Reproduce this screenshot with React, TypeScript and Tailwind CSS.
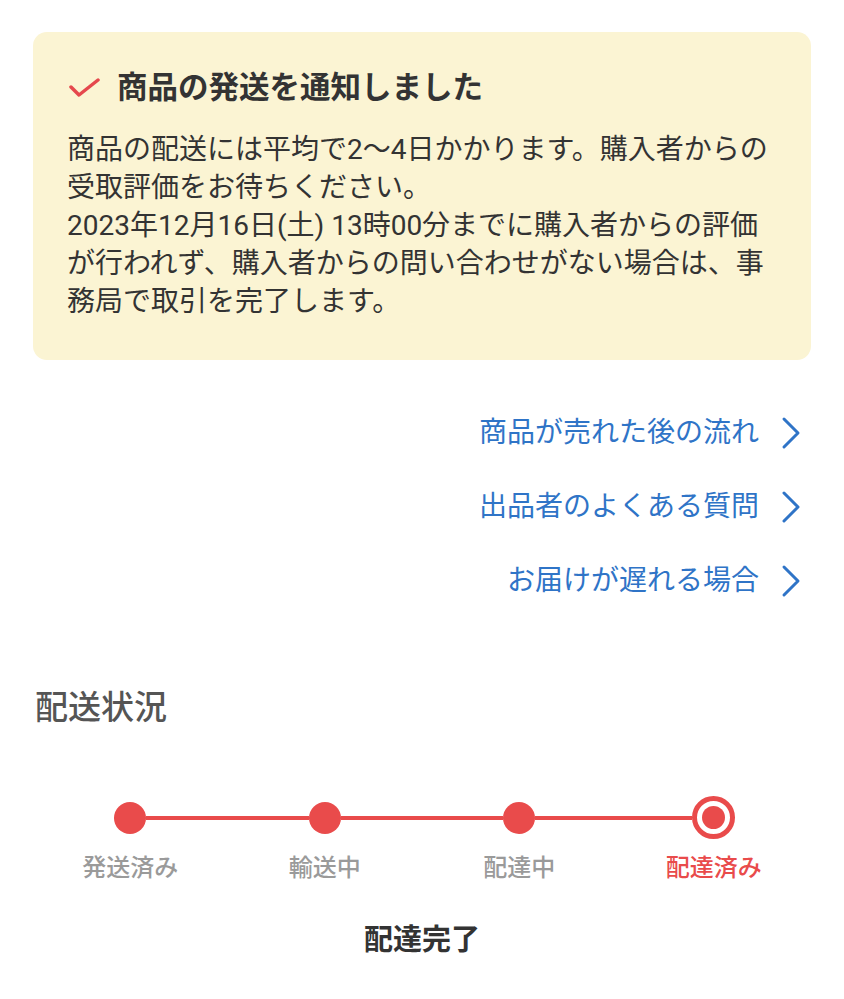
const FONT = { fontFamily: '"Roboto", "Noto Sans CJK JP", sans-serif' };

const links = ["商品が売れた後の流れ", "出品者のよくある質問", "お届けが遅れる場合"];

const steps = ["発送済み", "輸送中", "配達中", "配達済み"];

function Chevron() {
  return (
    <svg width="20" height="34" viewBox="0 0 20 34" fill="none" className="shrink-0">
      <polyline
        points="3,3 17,17 3,31"
        stroke="#2f74c7"
        strokeWidth="3"
        strokeLinecap="round"
        strokeLinejoin="round"
      />
    </svg>
  );
}

function Step({ label, index, last }: { label: string; index: number; last: boolean }) {
  return (
    <div className="flex flex-col items-center">
      <div className="flex h-[43px] w-full items-center">
        <div className={`h-[4px] flex-1 ${index === 0 ? "bg-transparent" : "bg-[#e94b4b]"}`} />
        {last ? (
          <div className="flex h-[43px] w-[43px] items-center justify-center rounded-full border-[5px] border-[#e94b4b] bg-white">
            <div className="h-[23px] w-[23px] rounded-full bg-[#e94b4b]" />
          </div>
        ) : (
          <div className="h-[32px] w-[32px] rounded-full bg-[#e94b4b]" />
        )}
        <div className={`h-[4px] flex-1 ${last ? "bg-transparent" : "bg-[#e94b4b]"}`} />
      </div>
      <span
        className={`mt-[13px] text-[24px] font-medium leading-[32px] ${last ? "text-[#e94b4b]" : "text-[#9a9a9a]"}`}
      >
        {label}
      </span>
    </div>
  );
}

export default function App() {
  return (
    <div className="min-h-[999px] w-[844px] bg-white pt-[32px]" style={FONT}>
      {/* 発送通知 */}
      <div className="mx-[33px] rounded-[14px] bg-[#fbf4d3] px-[34px] pb-[39px] pt-[36px]">
        <div className="flex items-center">
          <svg width="33" height="20" viewBox="0 0 33 20" fill="none" className="shrink-0">
            <polyline
              points="4,9 12,17 31,2"
              stroke="#e5484d"
              strokeWidth="3.5"
              strokeLinecap="round"
              strokeLinejoin="round"
            />
          </svg>
          <h1 className="ml-[17px] text-[30.5px] font-bold leading-[40px] text-[#333]">
            商品の発送を通知しました
          </h1>
        </div>
        <p className="mt-[23px] whitespace-nowrap text-[28px] leading-[38px] text-[#333]">
          商品の配送には平均で2〜4日かかります。購入者からの
          <br />
          受取評価をお待ちください。
          <br />
          2023年12月16日(土) 13時00分までに購入者からの評価
          <br />
          が行われず、購入者からの問い合わせがない場合は、事
          <br />
          務局で取引を完了します。
        </p>
      </div>

      {/* リンク */}
      <div className="mt-[36px] flex flex-col items-end pr-[43px]">
        {links.map((l) => (
          <a key={l} className="flex h-[74px] items-center gap-[22px] text-[28px] text-[#2f74c7]">
            <span>{l}</span>
            <Chevron />
          </a>
        ))}
      </div>

      {/* 配送状況 */}
      <h2 className="ml-[35px] mt-[70px] text-[33px] font-medium leading-[40px] text-[#555]">
        配送状況
      </h2>

      <div className="mx-[33px] mt-[68px] grid grid-cols-4">
        {steps.map((s, i) => (
          <Step key={s} label={s} index={i} last={i === steps.length - 1} />
        ))}
      </div>

      <p className="mt-[36px] text-center text-[29px] font-bold leading-[40px] text-[#333]">
        配達完了
      </p>
    </div>
  );
}
